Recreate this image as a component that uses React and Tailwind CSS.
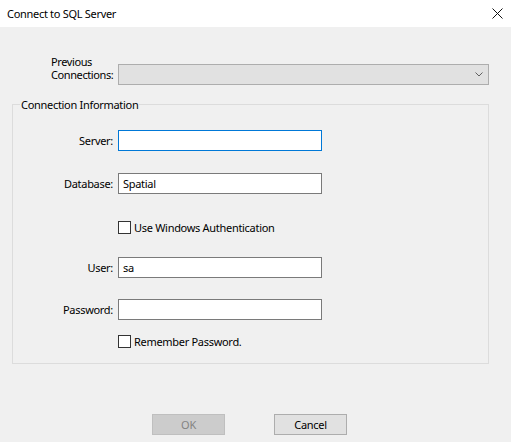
import React from "react";

function Field({ label, value, focused }) {
  return (
    <div className="flex items-center">
      <div className="w-[100px] text-right">{label}</div>
      <div
        className={`ml-[5px] h-[21px] w-[204px] bg-white px-[4px] leading-[19px] border ${
          focused ? "border-[#0078d7]" : "border-[#7a7a7a]"
        }`}
      >
        {value}
      </div>
    </div>
  );
}

function Check({ label }) {
  return (
    <div className="ml-[105px] flex h-[13px] items-center">
      <div className="h-[13px] w-[13px] border border-[#333333] bg-white" />
      <span className="ml-[3px]">{label}</span>
    </div>
  );
}

export default function App() {
  return (
    <div
      className="h-[442px] w-[511px] overflow-hidden bg-[#f0f0f0] text-[11px] leading-[13px] tracking-[-0.3px] text-black"
      style={{ fontFamily: '"Noto Sans", sans-serif' }}
    >
      <div className="flex h-[27px] items-center justify-between bg-white pl-[7px] pr-[8px]">
        <span>Connect to SQL Server</span>
        <svg width="11" height="11" viewBox="0 0 11 11" className="mb-[1px]">
          <path d="M0.5 0.5 L10.5 10.5 M10.5 0.5 L0.5 10.5" stroke="#111" strokeWidth="1" />
        </svg>
      </div>

      <div className="ml-[51px] mt-[28px] flex items-end">
        <div className="w-[64px] whitespace-nowrap pb-[4px] tracking-[-0.4px]">
          <div>Previous</div>
          <div>Connections:</div>
        </div>
        <div className="ml-[3px] flex h-[21px] w-[371px] items-center justify-end border border-[#adadad] bg-[#e1e1e1] pr-[5px]">
          <svg width="8" height="5" viewBox="0 0 8 5">
            <path d="M0.5 0.5 L4 4 L7.5 0.5" fill="none" stroke="#606060" strokeWidth="1" />
          </svg>
        </div>
      </div>

      <fieldset className="ml-[12px] mt-[13px] w-[477px] border border-[#dcdcdc] pb-[15px]">
        <legend className="ml-[7px] px-[1px]">Connection Information</legend>
        <div className="mt-[19px] flex flex-col">
          <Field label="Server:" value="" focused />
          <div className="mt-[22px]">
            <Field label="Database:" value="Spatial" />
          </div>
          <div className="mt-[27px]">
            <Check label="Use Windows Authentication" />
          </div>
          <div className="mt-[23px]">
            <Field label="User:" value="sa" />
          </div>
          <div className="mt-[21px]">
            <Field label="Password:" value="" />
          </div>
          <div className="mt-[15px]">
            <Check label="Remember Password." />
          </div>
        </div>
      </fieldset>

      <div className="ml-[152px] mt-[50px] flex">
        <div className="flex h-[21px] w-[73px] items-center justify-center border border-[#bfbfbf] bg-[#cccccc] text-[#838383]">
          OK
        </div>
        <div className="ml-[49px] flex h-[21px] w-[73px] items-center justify-center border border-[#adadad] bg-[#e1e1e1]">
          Cancel
        </div>
      </div>
    </div>
  );
}
